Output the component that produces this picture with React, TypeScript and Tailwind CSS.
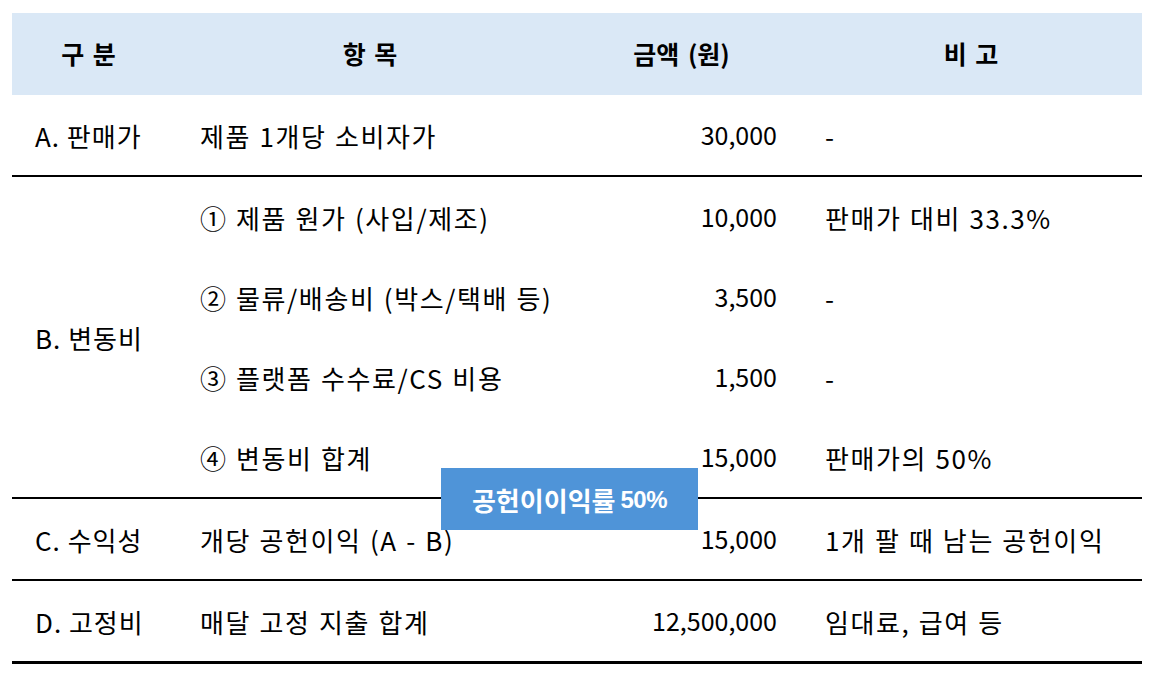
import React from 'react';

const font = { fontFamily: '"Noto Sans CJK KR", "Noto Sans", sans-serif' };

const Cells = ({ item, amount, note }: { item: string; amount: string; note: string }) => (
    <div className="flex h-[80px] items-center">
        <div className="w-[386px] pl-[23px] tracking-[1.6px] [word-spacing:1px]">{item}</div>
        <div className="w-[237px] pr-[23px] text-right text-[25px]">{amount}</div>
        <div className="w-[342px] pl-[25px] tracking-[1.6px] [word-spacing:1px]">{note}</div>
    </div>
);

const Label = ({ children }: { children: React.ReactNode }) => (
    <div className="w-[165px] pl-[23px] flex items-center tracking-[1px]">{children}</div>
);

export default function App() {
    return (
        <div className="bg-white w-[1154px] h-[677px] pl-[12px] pt-[13px] text-black" style={font}>
            <div className="relative w-[1130px] text-[26px]">
                {/* Header */}
                <div className="flex h-[82px] items-center bg-[#dae8f6] font-bold text-[25px] [word-spacing:3px]">
                    <div className="w-[165px] pr-[12px] text-center">구 분</div>
                    <div className="w-[386px] text-center">항 목</div>
                    <div className="w-[237px] text-center">금액 (원)</div>
                    <div className="w-[342px] text-center">비 고</div>
                </div>

                {/* A */}
                <div className="flex border-b-2 border-black">
                    <Label>A. 판매가</Label>
                    <Cells item="제품 1개당 소비자가" amount="30,000" note="-" />
                </div>

                {/* B */}
                <div className="flex border-b-2 border-black">
                    <Label>B. 변동비</Label>
                    <div className="flex flex-col">
                        <Cells item="① 제품 원가 (사입/제조)" amount="10,000" note="판매가 대비 33.3%" />
                        <Cells item="② 물류/배송비 (박스/택배 등)" amount="3,500" note="-" />
                        <Cells item="③ 플랫폼 수수료/CS 비용" amount="1,500" note="-" />
                        <Cells item="④ 변동비 합계" amount="15,000" note="판매가의 50%" />
                    </div>
                </div>

                {/* C */}
                <div className="flex border-b-2 border-black">
                    <Label>C. 수익성</Label>
                    <Cells item="개당 공헌이익 (A - B)" amount="15,000" note="1개 팔 때 남는 공헌이익" />
                </div>

                {/* D */}
                <div className="flex border-b-[3px] border-black">
                    <Label>D. 고정비</Label>
                    <Cells item="매달 고정 지출 합계" amount="12,500,000" note="임대료, 급여 등" />
                </div>

                {/* badge */}
                <div className="absolute left-[429px] top-[455px] w-[257px] h-[62px] bg-[#4f94d8] text-white font-bold flex items-center justify-center gap-[5px]">
                    <span className="text-[26px]">공헌이이익률</span>
                    <span className="text-[24px] pt-[2px] tracking-[-0.5px]" style={{ fontFamily: '"Liberation Sans", Arial, sans-serif' }}>50%</span>
                </div>
            </div>
        </div>
    );
}
